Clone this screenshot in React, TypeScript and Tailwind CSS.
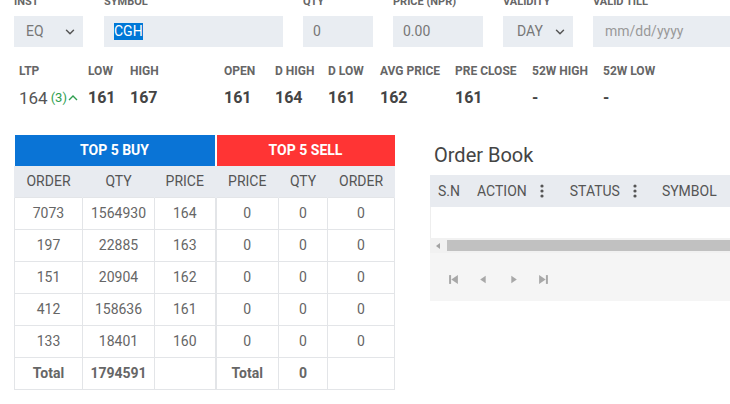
import { ChevronDown } from "lucide-react";

const buyRows = [
  { order: 7073, qty: 1564930, price: 164 },
  { order: 197, qty: 22885, price: 163 },
  { order: 151, qty: 20904, price: 162 },
  { order: 412, qty: 158636, price: 161 },
  { order: 133, qty: 18401, price: 160 },
];

const stats = [
  { label: "LOW", value: "161", w: "w-[42px]" },
  { label: "HIGH", value: "167", w: "w-[94px]" },
  { label: "OPEN", value: "161", w: "w-[51px]" },
  { label: "D HIGH", value: "164", w: "w-[53px]" },
  { label: "D LOW", value: "161", w: "w-[52px]" },
  { label: "AVG PRICE", value: "162", w: "w-[75px]" },
  { label: "PRE CLOSE", value: "161", w: "w-[77px]" },
  { label: "52W HIGH", value: "-", w: "w-[71px]" },
  { label: "52W LOW", value: "-", w: "w-[71px]" },
];

function Field({ label, w, children }: { label: string; w: string; children: React.ReactNode }) {
  return (
    <div className={`${w} shrink-0`}>
      <div className="text-[11px] font-bold text-[#666] leading-[14px] h-[14px] mb-[7px] whitespace-nowrap">{label}</div>
      <div className="h-[31px] bg-[#e9edf2] flex items-center text-[14px] text-[#777]">{children}</div>
    </div>
  );
}

function Kebab() {
  return (
    <svg width="4" height="14" viewBox="0 0 4 14" className="text-[#555]" fill="currentColor">
      <circle cx="2" cy="2" r="1.6" />
      <circle cx="2" cy="7" r="1.6" />
      <circle cx="2" cy="12" r="1.6" />
    </svg>
  );
}

export default function App() {
  const cell = "h-[32px] text-center border border-[#e3e5e8] text-[14px] text-[#666] p-0";
  const head = "h-[31px] text-center bg-[#e8ebf0] text-[14px] font-normal text-[#555] p-0 border-x border-[#e8ebf0]";
  return (
    <div className="w-[730px] h-[404px] overflow-hidden bg-white font-['Roboto',sans-serif]">
      {/* order form */}
      <div className="flex gap-[20px] pl-[14px] -mt-[5px]">
        <Field label="INST" w="w-[69px]">
          <span className="pl-[12px] flex-1">EQ</span>
          <ChevronDown size={14} strokeWidth={2.5} className="mr-[6px] text-[#555]" />
        </Field>
        <Field label="SYMBOL" w="w-[179px] ml-[1px]">
          <span className="ml-[10px] bg-[#0078d7] text-white leading-[17px]">CGH</span>
        </Field>
        <Field label="QTY" w="w-[70px]">
          <span className="pl-[10px]">0</span>
        </Field>
        <Field label="PRICE (NPR)" w="w-[90px]">
          <span className="pl-[10px]">0.00</span>
        </Field>
        <Field label="VALIDITY" w="w-[70px]">
          <span className="pl-[14px] flex-1">DAY</span>
          <ChevronDown size={14} strokeWidth={2.5} className="mr-[6px] text-[#555]" />
        </Field>
        <Field label="VALID TILL" w="w-[150px]">
          <span className="pl-[12px] text-[#999]">mm/dd/yyyy</span>
        </Field>
      </div>

      {/* market stats */}
      <div className="flex pl-[19px] mt-[16px]">
        <div className="w-[69px]">
          <div className="text-[12px] font-bold text-[#666] leading-[16px]">LTP</div>
          <div className="mt-[9px] flex items-center leading-[20px]">
            <span className="text-[17px] text-[#555]">164</span>
            <span className="text-[13px] text-[#2e9e4f] ml-[3px]">(3)</span>
            <svg width="10" height="8" viewBox="0 0 10 8" className="text-[#2e9e4f] ml-[1px]">
              <path d="M1 6 L5 2 L9 6" fill="none" stroke="currentColor" strokeWidth="1.4" />
            </svg>
          </div>
        </div>
        {stats.map((s) => (
          <div key={s.label} className={`${s.w} shrink-0`}>
            <div className="text-[12px] font-bold text-[#666] leading-[16px] whitespace-nowrap">{s.label}</div>
            <div className="mt-[9px] text-[16px] font-bold text-[#444] leading-[20px]">{s.value}</div>
          </div>
        ))}
      </div>

      <div className="flex mt-[27px]">
        {/* top 5 depth */}
        <div className="pl-[14px] w-[394px] shrink-0">
          <table className="border-collapse table-fixed w-[380px]">
            <colgroup>
              <col className="w-[68px]" />
              <col className="w-[72px]" />
              <col className="w-[61px]" />
              <col className="w-[63px]" />
              <col className="w-[49px]" />
              <col className="w-[67px]" />
            </colgroup>
            <thead>
              <tr>
                <th colSpan={3} className="h-[31px] bg-[#0a74d6] text-white text-[14px] font-bold p-0">TOP 5 BUY</th>
                <th colSpan={3} className="h-[31px] bg-[#ff3434] text-white text-[14px] font-bold p-0 border-l-2 border-white">TOP 5 SELL</th>
              </tr>
              <tr>
                <th className={head}>ORDER</th>
                <th className={head}>QTY</th>
                <th className={head}>PRICE</th>
                <th className={`${head} border-l-2`}>PRICE</th>
                <th className={head}>QTY</th>
                <th className={head}>ORDER</th>
              </tr>
            </thead>
            <tbody>
              {buyRows.map((r) => (
                <tr key={r.order}>
                  <td className={cell}>{r.order}</td>
                  <td className={cell}>{r.qty}</td>
                  <td className={cell}>{r.price}</td>
                  <td className={`${cell} border-l-2`}>0</td>
                  <td className={cell}>0</td>
                  <td className={cell}>0</td>
                </tr>
              ))}
              <tr>
                <td className={`${cell} font-bold text-[#555]`}>Total</td>
                <td className={`${cell} font-bold text-[#555]`}>1794591</td>
                <td className={cell}></td>
                <td className={`${cell} border-l-2 font-bold text-[#555]`}>Total</td>
                <td className={`${cell} font-bold text-[#555]`}>0</td>
                <td className={cell}></td>
              </tr>
            </tbody>
          </table>
        </div>

        {/* order book */}
        <div className="ml-[36px] flex-1 min-w-0">
          <div className="pl-[4px] pt-[6px] text-[20px] text-[#444] leading-[28px]">Order Book</div>
          <div className="mt-[6px] w-[320px]">
            <div className="h-[32px] bg-[#e8ebf0] flex items-center text-[14px] text-[#555] whitespace-nowrap">
              <span className="ml-[8px]">S.N</span>
              <span className="ml-[17px]">ACTION</span>
              <span className="ml-[13px]"><Kebab /></span>
              <span className="ml-[26px]">STATUS</span>
              <span className="ml-[13px]"><Kebab /></span>
              <span className="ml-[25px]">SYMBOL</span>
            </div>
            <div className="h-[31px] bg-white border-l border-[#eee]" />
            <div className="h-[15px] flex bg-[#f1f1f1]">
              <div className="w-[17px] flex items-center justify-center">
                <svg width="5" height="6" viewBox="0 0 5 6"><path d="M4 0 L0 3 L4 6 Z" fill="#a3a3a3" /></svg>
              </div>
              <div className="flex-1 bg-[#c1c1c1] my-[2px]" />
            </div>
            <div className="h-[48px] bg-[#f5f5f5] flex items-center pt-[4px] pl-[18px] gap-[19px] text-[#a8a8a8]">
              <svg width="11" height="11" viewBox="0 0 10 10"><rect x="1" y="1" width="1.8" height="8" fill="currentColor" /><path d="M9 1 L3 5 L9 9 Z" fill="currentColor" /></svg>
              <svg width="11" height="11" viewBox="0 0 10 10"><path d="M7 1.5 L2 5 L7 8.5 Z" fill="currentColor" /></svg>
              <svg width="11" height="11" viewBox="0 0 10 10"><path d="M3 1.5 L8 5 L3 8.5 Z" fill="currentColor" /></svg>
              <svg width="11" height="11" viewBox="0 0 10 10"><path d="M1 1 L7 5 L1 9 Z" fill="currentColor" /><rect x="7.2" y="1" width="1.8" height="8" fill="currentColor" /></svg>
            </div>
          </div>
        </div>
      </div>
    </div>
  );
}
